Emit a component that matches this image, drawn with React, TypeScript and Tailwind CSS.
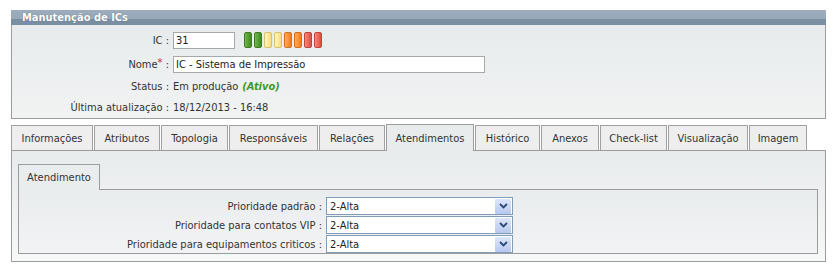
import React from 'react';

const font = "font-['DejaVu_Sans_Condensed','DejaVu_Sans',sans-serif]";

const levels = [
  'from-[#6fb84a] to-[#3f8a22] border-[#3f7d25]',
  'from-[#6fb84a] to-[#3f8a22] border-[#3f7d25]',
  'from-[#fff6c4] to-[#f6dc78] border-[#d9c06a]',
  'from-[#fff6c4] to-[#f6dc78] border-[#d9c06a]',
  'from-[#fbab5c] to-[#ef7d1d] border-[#d66e1a]',
  'from-[#fbab5c] to-[#ef7d1d] border-[#d66e1a]',
  'from-[#f18a7c] to-[#de4a3c] border-[#c0453a]',
  'from-[#f18a7c] to-[#de4a3c] border-[#c0453a]',
];

const tabs = [
  { label: 'Informações', w: 'w-[82px]' },
  { label: 'Atributos', w: 'w-[66px]' },
  { label: 'Topologia', w: 'w-[67px]' },
  { label: 'Responsáveis', w: 'w-[89px]' },
  { label: 'Relações', w: 'w-[66px]' },
  { label: 'Atendimentos', w: 'w-[88px]', active: true },
  { label: 'Histórico', w: 'w-[65px]' },
  { label: 'Anexos', w: 'w-[58px]' },
  { label: 'Check-list', w: 'w-[67px]' },
  { label: 'Visualização', w: 'w-[80px]' },
  { label: 'Imagem', w: 'w-[58px]' },
];

const priorities = ['Prioridade padrão', 'Prioridade para contatos VIP', 'Prioridade para equipamentos criticos'];

const Chevron = () => (
  <svg width="9" height="6" viewBox="0 0 9 6">
    <path d="M1 1 L4.5 4.5 L8 1" fill="none" stroke="#2b4a78" strokeWidth="1.8" />
  </svg>
);

const Field = ({ label, star, children, h }: { label: string; star?: boolean; children: React.ReactNode; h: string }) => (
  <div className={`flex items-center ${h}`}>
    <div className="w-[157px] text-right text-[#333]">
      {label}
      {star && <span className="text-[#d02020] relative -top-[2px]">*</span>} :
    </div>
    <div className="ml-[4px] flex items-center">{children}</div>
  </div>
);

export default function App() {
  return (
    <div className={`w-[835px] h-[269px] bg-white pt-[10px] px-[11px] text-[11px] leading-none ${font}`}>
      {/* Manutenção de ICs */}
      <div className="w-[815px]">
        <div className="h-[15px] bg-[linear-gradient(#9dadbd_0%,#97a8b8_60%,#7a8ea2_61%,#7b8fa3_100%)] pl-[11px] flex items-center text-white font-bold text-[11px] [text-shadow:0_0_1px_#4d6073]">
          Manutenção de ICs
        </div>
        <div className="border border-t-0 border-[#9c9c9c] bg-gradient-to-b from-[#e8ebec] to-[#f1f3f3] pt-[3px]">
          <Field label="IC" h="h-[24px]">
            <div className="w-[62px] h-[17px] border border-[#a8a8a8] bg-white px-[2px] flex items-center text-[#222]">31</div>
            <div className="flex gap-[2px] ml-[9px]">
              {levels.map((c, i) => (
                <div key={i} className={`w-[8px] h-[16px] rounded-[2px] border bg-gradient-to-r ${c}`} />
              ))}
            </div>
          </Field>
          <Field label="Nome" star h="h-[24px]">
            <div className="w-[312px] h-[17px] border border-[#a8a8a8] bg-white px-[2px] flex items-center text-[#222]">
              IC - Sistema de Impressão
            </div>
          </Field>
          <Field label="Status" h="h-[21px]">
            <span className="text-[#333]">Em produção</span>
            <span className="ml-[4px] italic font-bold text-[#3c9a1c]">(Ativo)</span>
          </Field>
          <Field label="Última atualização" h="h-[21px]">
            <span className="text-[#333]">18/12/2013 - 16:48</span>
          </Field>
        </div>
      </div>

      {/* Abas */}
      <div className="mt-[6px] w-[815px]">
        <div className="flex items-end gap-px h-[25px]">
          {tabs.map((t) =>
            t.active ? (
              <div
                key={t.label}
                className={`${t.w} shrink-0 h-[27px] -mb-px relative z-10 border border-b-0 border-[#9c9c9c] bg-[#e9eced] flex items-center justify-center text-[#333]`}
              >
                {t.label}
              </div>
            ) : (
              <div
                key={t.label}
                className={`${t.w} shrink-0 h-[25px] border border-b-0 border-[#a0a0a0] bg-[#eeeeee] flex items-center justify-center text-[#333]`}
              >
                {t.label}
              </div>
            )
          )}
        </div>
        <div className="border border-[#9c9c9c] bg-gradient-to-b from-[#e8ebec] to-[#f7f8f8] pt-[13px] pl-[6px] pr-[7px] pb-[7px]">
          <div className="flex">
            <div className="w-[82px] h-[26px] -mb-px relative z-10 border border-b-0 border-[#9c9c9c] bg-[#eaedee] flex items-center justify-center text-[#333]">
              Atendimento
            </div>
          </div>
          <div className="border border-[#9c9c9c] bg-gradient-to-b from-[#e9eced] to-[#f2f3f4] pt-[7px] flex flex-col gap-px">
            {priorities.map((p) => (
              <div key={p} className="flex items-center h-[18px]">
                <div className="w-[303px] text-right text-[#333]">{p} :</div>
                <div className="ml-[4px] w-[187px] h-[18px] border border-[#7f9db9] bg-white flex items-center pl-[3px] pr-px text-[#222]">
                  <span className="flex-1">2-Alta</span>
                  <div className="w-[16px] h-[15px] rounded-[1px] bg-gradient-to-b from-[#dde7fb] to-[#b7c8ef] flex items-center justify-center">
                    <Chevron />
                  </div>
                </div>
              </div>
            ))}
          </div>
        </div>
      </div>
    </div>
  );
}
